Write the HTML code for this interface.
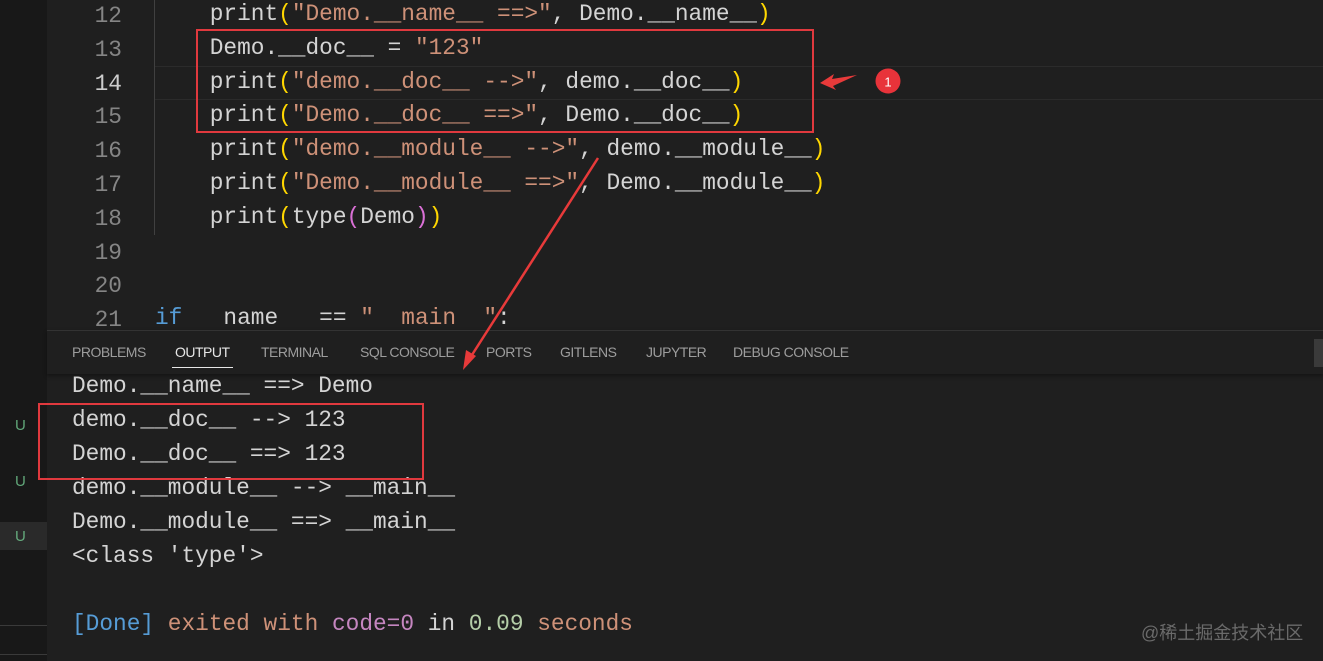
<!DOCTYPE html>
<html><head><meta charset="utf-8"><style>
body{margin:0;width:1323px;height:661px;background:#1f1f1f;overflow:hidden;position:relative;font-family:"Liberation Mono",monospace;}
.side{position:absolute;left:0;top:0;width:47px;height:661px;background:#181818;}
.u{position:absolute;left:15px;font:15px "Liberation Sans",sans-serif;color:#73c991;opacity:.8}
.ln{position:absolute;left:60px;width:62px;text-align:right;font-size:22.8px;color:#858585;}
.code{position:absolute;font-size:22.8px;color:#d4d4d4;white-space:pre;line-height:34px}
.s{color:#ce9178}.y{color:#ffd700}.p{color:#da70d6}.b{color:#569cd6}.g{color:#b5cea8}.m{color:#c586c0}
.tabs{position:absolute;left:47px;top:330px;width:1276px;height:43px;border-top:1px solid #333;box-shadow:0 2px 4px #0006;}
.tab{position:absolute;top:13px;font:14px "Liberation Sans",sans-serif;color:#9d9d9d;letter-spacing:-0.5px}
.box{position:absolute;border:2px solid #e0393e;}
</style></head><body>
<div class="side">
<div class="u" style="top:417px">U</div>
<div class="u" style="top:473px">U</div>
<div style="position:absolute;left:0;top:522px;width:47px;height:28px;background:#2a2a2a"></div>
<div class="u" style="top:528px">U</div>
<div style="position:absolute;left:0;top:625px;width:47px;height:1px;background:#3a3a3a"></div>
<div style="position:absolute;left:0;top:654px;width:47px;height:1px;background:#3a3a3a"></div>
</div>
<div style="position:absolute;left:155px;top:66px;width:1168px;height:32px;border-top:1px solid #2b2b2b;border-bottom:1px solid #2b2b2b"></div>
<div style="position:absolute;left:154px;top:0;width:1px;height:235px;background:#404040"></div>
<div class="ln" style="top:0;line-height:33.8px">12<br>13<br><span style="color:#ccc">14</span><br>15<br>16<br>17<br>18<br>19<br>20<br>21</div>
<div class="code" style="left:155px;top:-2px;line-height:33.8px">    print<span class="y">(</span><span class="s">"Demo.__name__ ==>"</span>, Demo.__name__<span class="y">)</span>
    Demo.__doc__ = <span class="s">"123"</span>
    print<span class="y">(</span><span class="s">"demo.__doc__ --&gt;"</span>, demo.__doc__<span class="y">)</span>
    print<span class="y">(</span><span class="s">"Demo.__doc__ ==&gt;"</span>, Demo.__doc__<span class="y">)</span>
    print<span class="y">(</span><span class="s">"demo.__module__ --&gt;"</span>, demo.__module__<span class="y">)</span>
    print<span class="y">(</span><span class="s">"Demo.__module__ ==&gt;"</span>, Demo.__module__<span class="y">)</span>
    print<span class="y">(</span>type<span class="p">(</span>Demo<span class="p">)</span><span class="y">)</span>


<span class="b">if</span>   name   == <span class="s">"  main  "</span>:</div>
<div class="tabs" style="background:#1f1f1f">
<span class="tab" style="left:25px">PROBLEMS</span>
<span class="tab" style="left:128px;color:#e7e7e7">OUTPUT</span>
<div style="position:absolute;left:125px;top:36px;width:61px;height:1px;background:#e7e7e7"></div>
<span class="tab" style="left:214px">TERMINAL</span>
<span class="tab" style="left:313px">SQL CONSOLE</span>
<span class="tab" style="left:439px">PORTS</span>
<span class="tab" style="left:513px">GITLENS</span>
<span class="tab" style="left:599px">JUPYTER</span>
<span class="tab" style="left:686px">DEBUG CONSOLE</span>
<div style="position:absolute;left:1267px;top:8px;width:9px;height:28px;background:#3a3a3a"></div>
</div>
<div class="code" style="left:72px;top:369px">Demo.__name__ ==&gt; Demo
demo.__doc__ --&gt; 123
Demo.__doc__ ==&gt; 123
demo.__module__ --&gt; __main__
Demo.__module__ ==&gt; __main__
&lt;class 'type'&gt;

<span class="b">[Done]</span> <span class="s">exited with</span> <span class="m">code=0</span> in <span class="g">0.09</span> <span class="s">seconds</span></div>
<div class="box" style="left:196px;top:29px;width:614px;height:100px"></div>
<div class="box" style="left:38px;top:403px;width:382px;height:73px"></div>
<svg style="position:absolute;left:0;top:0" width="1323" height="661">
<line x1="598" y1="158" x2="470" y2="358" stroke="#e83a3a" stroke-width="2.5"/>
<polygon points="463,370 466,350 476,356" fill="#e83a3a"/>
<polygon points="820,83 834,74 832,79 857,75 833,86 836,90" fill="#e83a3a"/>
<circle cx="888" cy="81" r="12.5" fill="#e8333a"/>
<text x="888" y="86.5" text-anchor="middle" font-family="Liberation Sans" font-size="13" fill="#fff">1</text>
</svg>
<div style="position:absolute;left:1141px;top:619px;font:18px 'Liberation Sans','Noto Sans CJK SC',sans-serif;color:#6a6a6a">@稀土掘金技术社区</div>
</body></html>
